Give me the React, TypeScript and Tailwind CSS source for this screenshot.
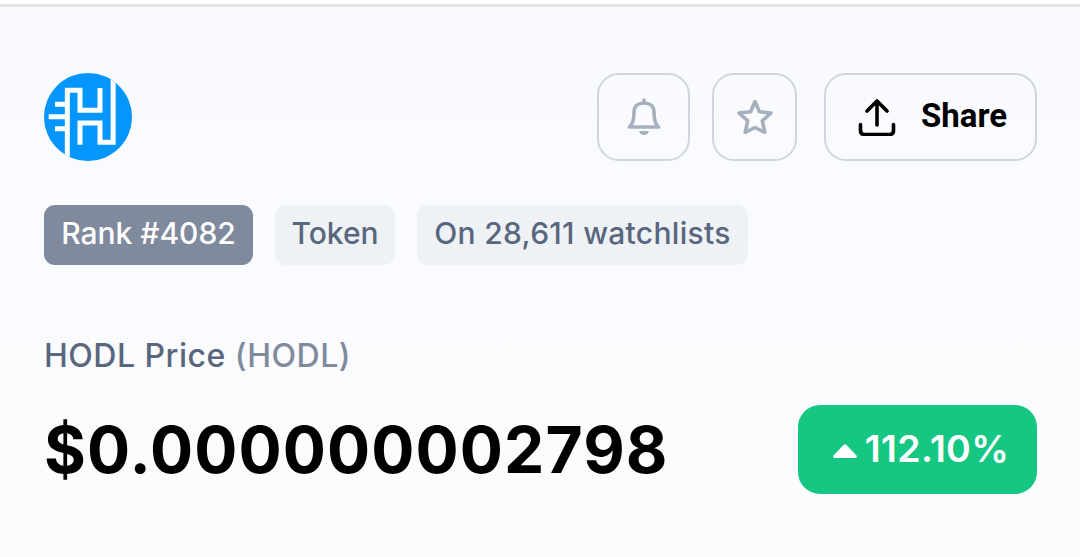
import type { ReactNode } from "react";

const TAGS = [
  { label: "Rank #4082", className: "w-[209px] bg-[#808a9d] text-white" },
  { label: "Token", className: "w-[120px] bg-[#eff2f5] text-[#58667e]" },
  { label: "On 28,611 watchlists", className: "w-[331px] bg-[#eff2f5] tracking-[0.3px] text-[#58667e]" },
];

function CoinLogo() {
  return (
    <svg viewBox="24 27 264 264" className="h-[88px] w-[88px]" aria-label="HODL">
      <defs>
        <clipPath id="coin">
          <circle cx="156" cy="159" r="132" />
        </clipPath>
      </defs>
      <g clipPath="url(#coin)">
        <rect x="24" y="27" width="264" height="264" fill="#0596fd" />
        <g fill="none" stroke="#fff" strokeWidth="15">
          <path d="M94 291V79h38v60h60V72" />
          <path d="M132 242v-65h60v58h39.500V27" />
          <path d="M57 121h37M38 158h56M57 194h37" />
        </g>
      </g>
    </svg>
  );
}

function BellIcon() {
  return (
    <svg viewBox="0 0 36 40" className="h-10 w-9" fill="none" stroke="#a6b0bd" strokeWidth="3.6" strokeLinecap="round" strokeLinejoin="round">
      <path d="M18 3v2M3.500 30c3-2.500 4.500-6 4.500-15C8 9 12.500 6 18 6s10 3 10 9c0 9 1.500 12.500 4.500 15z" />
      <path d="M13 34h10c-.6 2.600-2.500 4-5 4s-4.400-1.400-5-4z" fill="#a6b0bd" stroke="none" />
    </svg>
  );
}

function StarIcon() {
  return (
    <svg viewBox="0 0 36 36" className="h-9 w-9" fill="none" stroke="#a6b0bd" strokeWidth="3.600" strokeLinejoin="round">
      <path d="M18 2.500l4.400 10.300 11.600 1.200-8.700 7.800 2.500 11.500L18 28.500l-9.800 4.800 2.500-11.500L2 14l11.600-1.200z" />
    </svg>
  );
}

function ShareIcon() {
  return (
    <svg viewBox="0 0 38 38" className="h-[38px] w-[38px]" fill="none" stroke="#000" strokeWidth="3.600" strokeLinecap="round" strokeLinejoin="round">
      <path d="M19 27V3.500M9 13L19 3l10 10M2.500 26.500v6q0 4 4 4h25q4 0 4-4v-6" />
    </svg>
  );
}

function ActionButton({ label, className, children }: { label: string; className: string; children: ReactNode }) {
  return (
    <button
      aria-label={label}
      className={`flex h-[88px] shrink-0 items-center rounded-[22px] border-2 border-[#cfd6df] ${className}`}
    >
      {children}
    </button>
  );
}

export default function App() {
  return (
    <main className="h-[557px] w-[1080px] overflow-hidden bg-white pt-1 font-['Inter',sans-serif]">
      <div className="h-full border-t-[3px] border-[#e5e5e5] bg-linear-to-b from-[#f8fafd] to-[#fcfcfe] pt-[66px] pr-[43px] pl-11">
        <div className="flex items-center">
          <CoinLogo />
          <div className="ml-auto flex">
            <ActionButton label="Price alert" className="w-[93px] justify-center">
              <BellIcon />
            </ActionButton>
            <ActionButton label="Add to watchlist" className="ml-[22px] w-[85px] justify-center">
              <StarIcon />
            </ActionButton>
            <ActionButton label="Share" className="ml-[27px] w-[213px] gap-[25px] pl-8">
              <ShareIcon />
              <span className="pb-1 font-['Roboto',sans-serif] text-[33px] leading-none font-bold">Share</span>
            </ActionButton>
          </div>
        </div>

        <div className="mt-11 flex gap-[22px]">
          {TAGS.map((tag) => (
            <span
              key={tag.label}
              className={`flex h-[60px] items-center justify-center rounded-[11px] pb-1 text-[30px] leading-none font-medium whitespace-nowrap ${tag.className}`}
            >
              {tag.label}
            </span>
          ))}
        </div>

        <h1 className="mt-[71px] text-[32px] leading-10 font-medium tracking-[0.5px] text-[#58667e]">
          HODL Price <span className="text-[#808a9d]">(HODL)</span>
        </h1>

        <div className="mt-[29px] flex items-center justify-between">
          <span className="text-[64px] leading-[88px] font-bold tracking-[1.1px] text-black">$0.000000002798</span>
          <span className="flex h-[89px] w-[239px] items-center justify-center gap-2 rounded-[22px] bg-[#16c784] pl-[7px] text-[37.5px] leading-none font-semibold tracking-[0.35px] text-white">
            <svg viewBox="0 0 24 14" className="mt-0.5 h-3.5 w-6" fill="#fff">
              <path d="M10.500 1q1.500-1.500 3 0l10 10.500q1 2-1 2.500h-21q-2-.5-1-2.500z" />
            </svg>
            <span className="pb-0.5">112.10%</span>
          </span>
        </div>
      </div>
    </main>
  );
}
